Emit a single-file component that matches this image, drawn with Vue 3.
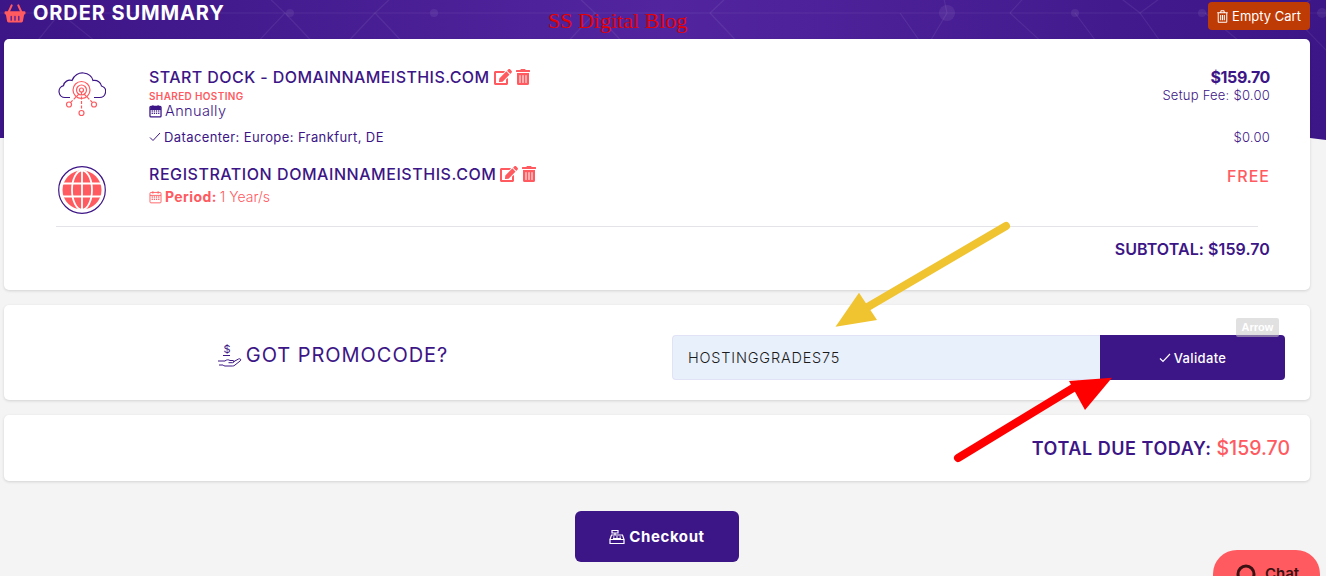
<script setup>
const editPath = 'M402.6 83.2l90.2 90.2c3.8 3.8 3.8 10 0 13.8L274.4 405.6l-92.8 10.3c-12.4 1.4-22.9-9.1-21.5-21.5l10.3-92.8L388.8 83.2c3.8-3.8 10-3.8 13.8 0zm162-22.9l-48.8-48.8c-15.2-15.2-39.9-15.2-55.2 0l-35.4 35.4c-3.8 3.8-3.8 10 0 13.8l90.2 90.2c3.8 3.8 10 3.8 13.8 0l35.4-35.4c15.2-15.3 15.2-40 0-55.2zM384 346.2V448H64V128h229.8c3.2 0 6.2-1.3 8.5-3.5l40-40c7.6-7.6 2.2-20.5-8.5-20.5H48C21.5 64 0 85.5 0 112v352c0 26.5 21.5 48 48 48h352c26.5 0 48-21.5 48-48V306.2c0-10.7-12.9-16-20.5-8.5l-40 40c-2.2 2.3-3.5 5.3-3.5 8.5z'
const trashPath = 'M32 464a48 48 0 0 0 48 48h288a48 48 0 0 0 48-48V128H32zm272-256a16 16 0 0 1 32 0v224a16 16 0 0 1-32 0zm-96 0a16 16 0 0 1 32 0v224a16 16 0 0 1-32 0zm-96 0a16 16 0 0 1 32 0v224a16 16 0 0 1-32 0zM432 32H312l-9.4-18.7A24 24 0 0 0 281.1 0H166.8a23.72 23.72 0 0 0-21.4 13.3L136 32H16A16 16 0 0 0 0 48v32a16 16 0 0 0 16 16h416a16 16 0 0 0 16-16V48a16 16 0 0 0-16-16z'
const calendarPath = 'M3 3h14a1.5 1.5 0 0 1 1.5 1.5v13a1.5 1.5 0 0 1-1.5 1.5H3a1.5 1.5 0 0 1-1.5-1.5v-13A1.5 1.5 0 0 1 3 3zM1.5 7.5h17M6 1v4M14 1v4'
const calendarDots = [
  [5, 10], [8.3, 10], [11.6, 10], [15, 10],
  [5, 13.5], [8.3, 13.5], [11.6, 13.5], [15, 13.5]
]

// nodes of the hexagon pattern in the header
const hexLines = [
  'M0 13H1326', 'M250 -20L285 13L250 50', 'M285 13L320 50', 'M410 -20L375 13L410 50',
  'M375 13L340 50', 'M560 -20L595 13L560 50', 'M595 13L630 50', 'M745 -20L710 13L745 50',
  'M1010 13L1045 45L1025 80', 'M1010 13L1040 -20', 'M1075 13L1110 60L1090 100', 'M1110 -10L1140 13L1185 -20',
  'M1140 13L1170 55', 'M1205 13L1250 50L1290 130', 'M1290 13L1326 -10', 'M1290 13L1326 50',
  'M900 13L940 70L920 110', 'M947 13L925 50', 'M940 -20L947 13', 'M60 13L30 50', 'M60 13L100 45L70 90'
]
const hexDots = [
  [290, 13, 4], [434, 13, 4], [947, 13, 8], [1075, 13, 4], [1202, 13, 4], [1322, 13, 5]
]
</script>

<template>
  <div class="page">
    <!-- purple hero behind the first card -->
    <div class="hero">
      <svg class="hero-pattern" width="1326" height="140" viewBox="0 0 1326 140" fill="none">
        <path v-for="d in hexLines" :key="d" :d="d" stroke="#ffffff" stroke-opacity="0.07" stroke-width="1.2" />
        <circle v-for="dot in hexDots" :key="dot[0]" :cx="dot[0]" :cy="dot[1]" :r="dot[2]" fill="#ffffff" fill-opacity="0.07" />
      </svg>
    </div>

    <div class="content">
      <header class="top-bar">
        <h1 class="page-title">
          <svg class="basket" width="22" height="19" viewBox="0 0 22 20">
            <path d="M7.5 1.5L4.5 8M14.5 1.5L17.5 8" stroke="#ff5a5f" stroke-width="2.2" stroke-linecap="round" fill="none" />
            <path fill="#ff5a5f" d="M1 7.5h20a1 1 0 0 1 1 1v1.5a1 1 0 0 1-1 1h-.4l-1.2 7a1.6 1.6 0 0 1-1.6 1.4H4.200a1.600 1.600 0 0 1-1.600-1.400l-1.200-7H1a1 1 0 0 1-1-1V8.500a1 1 0 0 1 1-1z" />
            <path d="M7 13v4M11 13v4M15 13v4" stroke="#52259f" stroke-width="1.5" stroke-linecap="round" />
          </svg>
          ORDER SUMMARY
        </h1>
        <button class="empty-cart">
          <svg width="11" height="13" viewBox="0 0 448 512" fill="none" stroke="#fff" stroke-width="42">
            <path d="M50 120V470a24 24 0 0 0 24 24H374a24 24 0 0 0 24-24V120M10 100H438M145 100L170 20H278L303 100M150 190V410M224 190V410M298 190V410" />
          </svg>
          Empty Cart
        </button>
      </header>

      <section class="card summary-card">
        <div class="item">
          <div class="item-icon cloud-icon">
            <svg width="48" height="48" viewBox="0 0 48 48" fill="none">
              <path d="M12 27.500H7a6 6 0 0 1-1.500-11.800A6.500 6.500 0 0 1 14 10.500C16 5 21 2.500 25.500 3c5 .5 8.500 3.500 9.500 7.500 4.500-.8 8 2 8.500 5.500 3.500 1 4.500 4 4 6.500-.5 3-3 5-6 5H36" stroke="#3c1586" stroke-width="1.200" />
              <g stroke="#ff5a5f" stroke-width="1.200">
                <circle cx="23.500" cy="20" r="2" />
                <circle cx="23.500" cy="20" r="5" />
                <circle cx="23.500" cy="20" r="8.500" />
                <path d="M23.500 22V40M21 24L13 32M26 24L34 32" stroke-dasharray="3 1.500" />
                <circle cx="23.500" cy="43" r="2.500" />
                <circle cx="11" cy="34.500" r="2.500" />
                <circle cx="36" cy="34.500" r="2.500" />
              </g>
            </svg>
          </div>
          <div class="item-body">
            <div class="item-title">
              START DOCK - DOMAINNAMEISTHIS.COM
              <svg class="action" width="18" height="16" viewBox="0 0 576 512"><path :d="editPath" /></svg>
              <svg class="action" width="14" height="16" viewBox="0 0 448 512"><path :d="trashPath" /></svg>
            </div>
            <div class="item-tag">SHARED HOSTING</div>
            <div class="item-cycle">
              <svg width="13" height="14" viewBox="0 0 20 20" fill="none">
                <path :d="calendarPath" stroke="#3c1586" stroke-width="2" />
                <path d="M2 3h16v4.500H2z" fill="#3c1586" />
                <rect v-for="d in calendarDots" :key="d.join()" :x="d[0] - 1" :y="d[1] - 1" width="2" height="2" fill="#3c1586" />
              </svg>
              Annually
            </div>
          </div>
          <div class="item-price">
            <div class="price">$159.70</div>
            <div class="fee">Setup Fee: $0.00</div>
          </div>
        </div>

        <div class="addon">
          <span class="addon-name">
            <svg width="12" height="10" viewBox="0 0 12 10" fill="none">
              <path d="M1 5.500L4 8.500L11 1" stroke="#3c1586" stroke-width="1" />
            </svg>
            Datacenter: Europe: Frankfurt, DE
          </span>
          <span class="fee">$0.00</span>
        </div>

        <div class="item item-domain">
          <div class="item-icon globe-icon">
            <svg width="48" height="48" viewBox="0 0 48 48" fill="none">
              <circle cx="24" cy="24" r="23.300" stroke="#3c1586" stroke-width="1.200" />
              <circle cx="24" cy="24" r="19.500" fill="#ff5a5f" />
              <g stroke="#ffffff" stroke-width="1.800">
                <ellipse cx="24" cy="24" rx="10" ry="19.500" />
                <path d="M24 4.500V43.500M5 17.500H43M5 30.500H43" />
              </g>
            </svg>
          </div>
          <div class="item-body">
            <div class="item-title item-title-wide">
              REGISTRATION DOMAINNAMEISTHIS.COM
              <svg class="action" width="18" height="16" viewBox="0 0 576 512"><path :d="editPath" /></svg>
              <svg class="action" width="14" height="16" viewBox="0 0 448 512"><path :d="trashPath" /></svg>
            </div>
            <div class="item-period">
              <svg width="13" height="14" viewBox="0 0 20 20" fill="none">
                <path :d="calendarPath" stroke="#ff5a5f" stroke-width="1.400" />
                <rect v-for="d in calendarDots" :key="d.join()" :x="d[0] - 1" :y="d[1] - 1" width="2" height="2" fill="#ff5a5f" />
              </svg>
              <strong>Period:</strong>
              <span class="period-value">1 Year/s</span>
            </div>
          </div>
          <div class="free">FREE</div>
        </div>

        <div class="divider"></div>
        <div class="subtotal">SUBTOTAL: $159.70</div>
      </section>

      <section class="card promo-card">
        <div class="promo-label">
          <svg width="24" height="24" viewBox="0 0 24 24" fill="none" stroke="#3c1586" stroke-width="1">
            <text x="5.500" y="10" class="promo-dollar" stroke="none">$</text>
            <path d="M5 12.500H12" />
            <path d="M0 18H7c1.500-1.500 3.500-1.500 5-.5h3c1.400 0 1.400 2.200-.5 2.200H10.500M15 19l5.500-3c1.500-.8 3 .5 1.800 1.800L17 22c-.8.800-1.500 1-2.500 1H7c-1 0-1.500-.5-2-1H1" />
          </svg>
          GOT PROMOCODE?
        </div>
        <form class="promo-form" @submit.prevent>
          <input class="promo-input" type="text" value="HOSTINGGRADES75" />
          <button class="validate" type="submit">
            <svg width="12" height="10" viewBox="0 0 12 10" fill="none">
              <path d="M1 5.500L4 8.500L11 1" stroke="#ffffff" stroke-width="1.200" />
            </svg>
            Validate
          </button>
        </form>
      </section>

      <section class="card total-card">
        <span class="total-label">TOTAL DUE TODAY:</span>
        <span class="total-value">$159.70</span>
      </section>

      <div class="checkout-row">
        <button class="checkout">
          <svg width="16" height="16" viewBox="0 0 16 16" fill="none" stroke="#ffffff" stroke-width="1.200">
            <path d="M3 1.500H9V4H3zM6 4V6M2.500 6H13.500L15 10.500H1zM1 10.500V14.500H15V10.500" />
            <path d="M4 8H5.500M7 8H9M10.500 8H12M4 9.500H12" stroke-width="1" />
          </svg>
          Checkout
        </button>
      </div>
    </div>

    <!-- things pasted over the screenshot -->
    <div class="watermark">SS Digital Blog</div>
    <svg class="arrows" width="1326" height="576" viewBox="0 0 1326 576" fill="none">
      <path d="M1006 226L866 308" stroke="#f0c330" stroke-width="8" stroke-linecap="round" />
      <path d="M835.500 326.700L859 292.700L877 320Z" fill="#f0c330" />
      <path d="M958 458L1078 385" stroke="#ff0000" stroke-width="8" stroke-linecap="round" />
      <path d="M1112 377.700L1069 381L1085 410Z" fill="#ff0000" />
    </svg>
    <div class="arrow-tip">Arrow</div>

    <div class="chat">
      <svg width="20" height="20" viewBox="0 0 20 20" fill="none">
        <circle cx="10" cy="10" r="8" stroke="#3b1214" stroke-width="3" />
      </svg>
      <span>Chat</span>
    </div>
  </div>
</template>

<style scoped>
.page {
  position: relative;
  height: 576px;
  overflow: hidden;
  background: #f4f4f4;
  font-family: Inter, "Open Sans", sans-serif;
  color: #3c1586;
}

.hero {
  position: absolute;
  top: 0;
  left: 0;
  right: 0;
  height: 140px;
  background: linear-gradient(90deg, #3c1586 0%, #52259f 50%, #3c1586 100%);
  clip-path: polygon(0 0, 100% 0, 100% 140px, 1310px 138px, 0 138px);
}

.hero-pattern {
  display: block;
}

.content {
  position: relative;
  padding: 0 16px 0 4px;
}

.top-bar {
  height: 39px;
  display: flex;
  justify-content: space-between;
  align-items: flex-start;
}

.page-title {
  margin: 3px 0 0;
  display: flex;
  align-items: center;
  gap: 7px;
  font-size: 20px;
  line-height: 20px;
  font-weight: 700;
  letter-spacing: 0.9px;
  color: #ffffff;
}

.empty-cart {
  margin-top: 2px;
  width: 102px;
  height: 28px;
  display: flex;
  align-items: center;
  justify-content: center;
  gap: 4px;
  padding: 0;
  border: none;
  border-radius: 4px;
  background: #bf3b06;
  color: #ffffff;
  font: 400 13px Inter, sans-serif;
}

.card {
  background: #ffffff;
  border-radius: 5px;
  box-shadow: 0 1px 3px rgba(0, 0, 0, 0.14);
}

.summary-card {
  height: 251px;
  box-sizing: border-box;
  padding: 27px 40px 0 52px;
}

.item {
  display: flex;
  align-items: flex-start;
}

.item-domain {
  margin-top: 17px;
}

.item-icon {
  width: 93px;
  flex: none;
}

.item-icon svg {
  display: block;
  margin-left: 2px;
}

.cloud-icon {
  padding-top: 4px;
}

.globe-icon {
  padding-top: 3px;
}

.item-body {
  flex: 1;
}

.item-title {
  display: flex;
  align-items: center;
  gap: 3px;
  font-size: 16px;
  line-height: 22px;
  font-weight: 500;
  letter-spacing: 0.42px;
}

.item-title-wide {
  letter-spacing: 0.55px;
}

.action {
  fill: #ff5a5f;
  margin-left: 1px;
}

.item-tag {
  margin-top: 1px;
  font-size: 10px;
  line-height: 14px;
  font-weight: 600;
  letter-spacing: 0.35px;
  color: #ff5a5f;
}

.item-cycle {
  display: flex;
  align-items: center;
  gap: 3px;
  margin-top: -1px;
  font-size: 14.500px;
  line-height: 18px;
  font-weight: 300;
  letter-spacing: 0.4px;
}

.item-period {
  margin-top: 2px;
  display: flex;
  align-items: center;
  gap: 3px;
  font-size: 14px;
  line-height: 20px;
  color: #ff5a5f;
  letter-spacing: 0.4px;
}

.item-period strong {
  font-weight: 700;
}

.period-value {
  font-weight: 300;
  letter-spacing: 0;
}

.item-price {
  text-align: right;
}

.price {
  font-size: 16px;
  line-height: 22px;
  font-weight: 700;
  letter-spacing: -0.4px;
}

.fee {
  font-size: 13px;
  line-height: 14px;
  font-weight: 300;
  letter-spacing: 0.25px;
}

.addon {
  margin: 8px 0 0 93px;
  display: flex;
  justify-content: space-between;
  align-items: center;
  font-size: 13px;
  line-height: 18px;
}

.addon-name {
  display: flex;
  align-items: center;
  gap: 3px;
  font-weight: 400;
  letter-spacing: 0.4px;
}

.free {
  margin-top: 2px;
  font-size: 16px;
  line-height: 22px;
  font-weight: 500;
  letter-spacing: 1px;
  color: #ff5a5f;
}

.divider {
  margin: 12px 12px 0 0;
  border-top: 1px solid #e4e4e8;
}

.subtotal {
  margin-top: 11px;
  text-align: right;
  font-size: 16px;
  line-height: 22px;
  font-weight: 600;
  letter-spacing: 0.08px;
}

.promo-card {
  margin-top: 15px;
  height: 95px;
  box-sizing: border-box;
  display: flex;
  align-items: center;
  padding: 10px 25px 0 0;
}

.promo-label {
  flex: 1;
  display: flex;
  align-items: center;
  justify-content: center;
  gap: 4px;
  margin-top: -5px;
  padding-right: 10px;
  font-size: 20px;
  font-weight: 400;
  letter-spacing: 0.95px;
}

.promo-dollar {
  font-size: 11px;
  letter-spacing: 0;
  fill: #3c1586;
}

.promo-form {
  width: 613px;
  height: 45px;
  display: flex;
}

.promo-input {
  flex: 1;
  min-width: 0;
  box-sizing: border-box;
  padding: 0 15px;
  border: 1px solid #e2e2f7;
  border-right: none;
  border-radius: 4px 0 0 4px;
  background: #e8f0fb;
  color: #1b1b1b;
  font: 300 14.500px Inter, sans-serif;
  letter-spacing: 0.8px;
  outline: none;
}

.validate {
  width: 185px;
  display: flex;
  align-items: center;
  justify-content: center;
  gap: 3px;
  border: none;
  border-radius: 0 4px 4px 0;
  background: #3c1586;
  color: #ffffff;
  font: 500 13px Inter, sans-serif;
  letter-spacing: 0.35px;
}

.total-card {
  margin-top: 15px;
  height: 66px;
  display: flex;
  align-items: center;
  justify-content: flex-end;
  gap: 5px;
  padding-right: 20px;
}

.total-label {
  font-size: 18px;
  font-weight: 600;
  letter-spacing: 0.55px;
}

.total-value {
  font-size: 19.500px;
  font-weight: 500;
  color: #ff5a5f;
}

.checkout-row {
  margin-top: 30px;
  display: flex;
  justify-content: center;
}

.checkout {
  width: 164px;
  height: 51px;
  display: flex;
  align-items: center;
  justify-content: center;
  gap: 4px;
  border: none;
  border-radius: 6px;
  background: #3c1586;
  color: #ffffff;
  font: 700 15px Inter, sans-serif;
  letter-spacing: 0.6px;
}

.watermark {
  position: absolute;
  top: 9px;
  left: 548px;
  font: 400 22px/24px "Liberation Serif", serif;
  color: #e60000;
}

.arrows {
  position: absolute;
  top: 0;
  left: 0;
  pointer-events: none;
}

.arrow-tip {
  position: absolute;
  top: 318px;
  left: 1236px;
  width: 43px;
  height: 19px;
  background: rgba(200, 200, 200, 0.55);
  border-radius: 2px;
  color: #ffffff;
  font: 700 11px/19px "Liberation Sans", sans-serif;
  text-align: center;
}

.chat {
  position: absolute;
  top: 550px;
  left: 1213px;
  width: 107px;
  height: 60px;
  box-sizing: border-box;
  padding: 14px 0 0 23px;
  display: flex;
  align-items: flex-start;
  gap: 9px;
  border-radius: 24px;
  background: #ff5a5f;
  color: #3b1214;
  font-size: 15px;
  font-weight: 600;
  line-height: 20px;
}
</style>

<style>
html, body {
  margin: 0;
  overflow: hidden;
}
</style>
